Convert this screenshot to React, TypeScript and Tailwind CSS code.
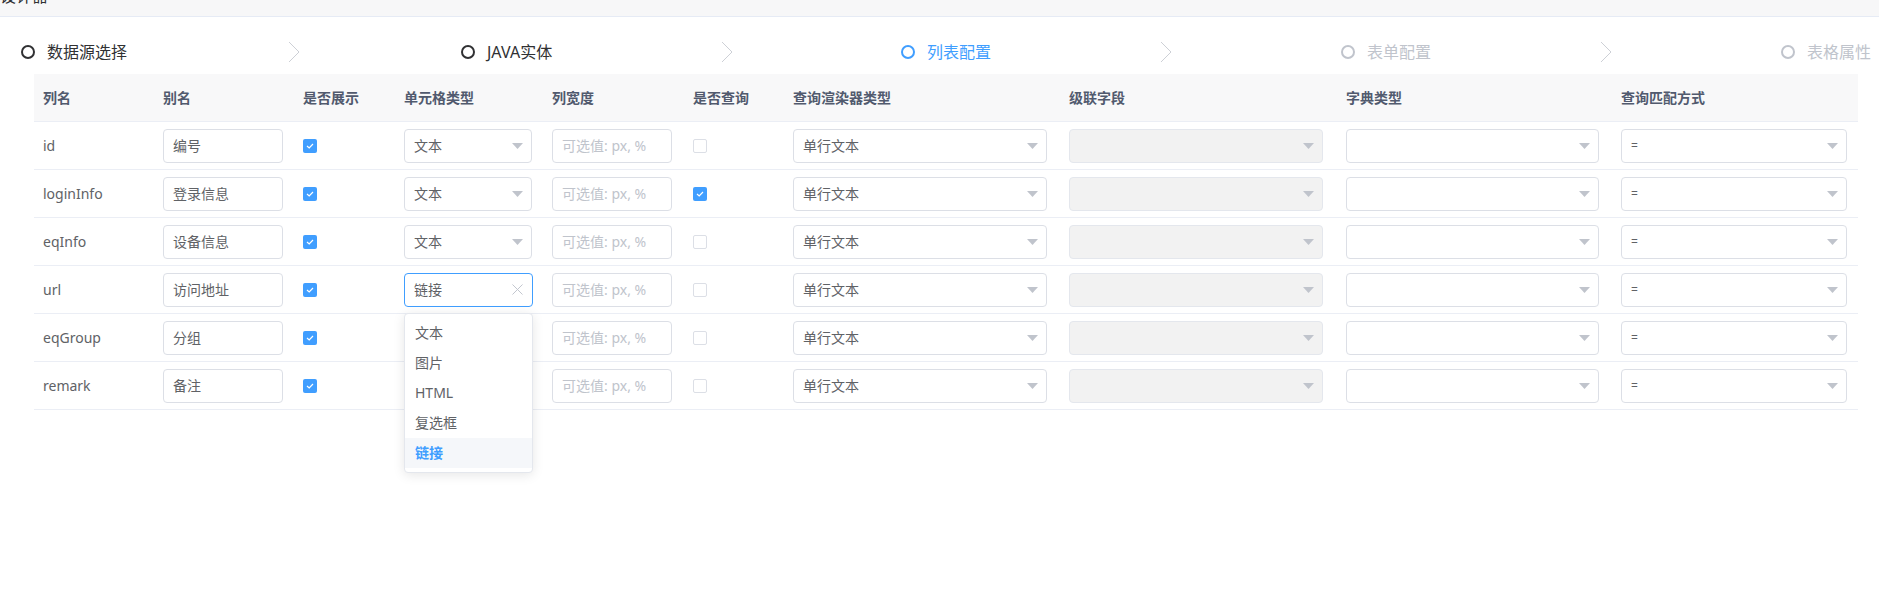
import { X } from "lucide-react";

const font = { fontFamily: '"Noto Sans", "Noto Sans CJK SC", sans-serif' };

type Row = {
  name: string;
  alias: string;
  show: boolean;
  cellType: string;
  query: boolean;
  open?: boolean;
  covered?: boolean;
};

const rows: Row[] = [
  { name: "id", alias: "编号", show: true, cellType: "文本", query: false },
  { name: "loginInfo", alias: "登录信息", show: true, cellType: "文本", query: true },
  { name: "eqInfo", alias: "设备信息", show: true, cellType: "文本", query: false },
  { name: "url", alias: "访问地址", show: true, cellType: "链接", query: false, open: true },
  // the next two selects sit under the open dropdown
  { name: "eqGroup", alias: "分组", show: true, cellType: "文本", query: false, covered: true },
  { name: "remark", alias: "备注", show: true, cellType: "文本", query: false, covered: true },
];

const headers = ["列名", "别名", "是否展示", "单元格类型", "列宽度", "是否查询", "查询渲染器类型", "级联字段", "字典类型", "查询匹配方式"];

const steps = [
  { title: "数据源选择", status: "done" },
  { title: "JAVA实体", status: "done" },
  { title: "列表配置", status: "active" },
  { title: "表单配置", status: "wait" },
  { title: "表格属性", status: "wait" },
];

const Caret = () => (
  <svg width="11" height="6" viewBox="0 0 11 6" className="shrink-0">
    <path d="M0 0 L11 0 L5.5 6 Z" fill="#c0c4cc" />
  </svg>
);

const Chevron = () => (
  <svg width="12" height="22" viewBox="0 0 12 22">
    <path d="M1 1 L11 11 L1 21" fill="none" stroke="#cdd0d6" strokeWidth="1" />
  </svg>
);

const Checkbox = ({ checked }: { checked: boolean }) =>
  checked ? (
    <span className="flex h-[14px] w-[14px] items-center justify-center rounded-[2px] bg-[#409eff]">
      <svg width="8" height="6" viewBox="0 0 8 6">
        <path d="M1 3 L3.2 5 L7 1" fill="none" stroke="#fff" strokeWidth="1.2" />
      </svg>
    </span>
  ) : (
    <span className="block h-[14px] w-[14px] rounded-[2px] border border-[#dcdfe6] bg-white" />
  );

const Input = ({ value, placeholder, width }: { value?: string; placeholder?: string; width: string }) => (
  <div className={`flex h-[34px] ${width} items-center rounded-[4px] border border-[#dcdfe6] bg-white px-[9px] text-[14px]`}>
    {value ? <span className="text-[#606266]">{value}</span> : <span className="text-[#c0c4cc]">{placeholder}</span>}
  </div>
);

const Select = ({
  value,
  width,
  disabled,
  small,
}: {
  value?: string;
  width: string;
  disabled?: boolean;
  small?: boolean;
}) => (
  <div
    className={`flex h-[34px] ${width} items-center justify-between rounded-[4px] border pl-[9px] pr-[8px] ${
      disabled ? "border-[#e4e7ed] bg-[#f2f2f2]" : "border-[#dcdfe6] bg-white"
    }`}
  >
    <span className={`text-[#606266] ${small ? "text-[12px]" : "text-[14px]"}`}>{value}</span>
    <Caret />
  </div>
);

const CellTypeSelect = ({ row }: { row: Row }) => {
  if (row.covered) return <Select width="w-[128px]" />;
  if (!row.open) return <Select value={row.cellType} width="w-[128px]" />;
  const options = ["文本", "图片", "HTML", "复选框", "链接"];
  return (
    <div className="relative">
      <div className="flex h-[34px] w-[129px] items-center justify-between rounded-[4px] border border-[#409eff] bg-white pl-[9px] pr-[5px] text-[14px]">
        <span className="text-[#606266]">{row.cellType}</span>
        <X size={19} strokeWidth={1.2} color="#c0c4cc" />
      </div>
      <div className="absolute left-0 top-[40px] z-10 w-[129px] rounded-[4px] border border-[#e4e7ed] bg-white py-[4px] shadow-[0_2px_12px_0_rgba(0,0,0,0.1)]">
        {options.map((o) => (
          <div
            key={o}
            className={`flex h-[30px] items-center px-[10px] text-[14px] ${
              o === row.cellType ? "bg-[#f5f7fa] font-bold text-[#409eff]" : "text-[#606266]"
            }`}
          >
            {o}
          </div>
        ))}
      </div>
    </div>
  );
};

const gridCols = "grid grid-cols-[120px_140px_101px_148px_141px_100px_276px_277px_275px_246px]";

export default function App() {
  return (
    <div className="min-h-[607px] bg-white" style={font}>
      <div className="relative h-[17px] overflow-hidden border-b border-[#e6ebf5] bg-[#f7f7f8]">
        <span className="absolute left-0 top-[-14px] text-[16px] leading-[20px] text-[#303133]">设计器</span>
      </div>

      <div className="mb-[11px] mt-[24px] flex h-[22px] overflow-hidden pl-[21px]">
        {steps.map((s, i) => {
          const textCls =
            s.status === "active" ? "text-[#409eff]" : s.status === "done" ? "text-[#303133]" : "text-[#c0c4cc]";
          const borderCls =
            s.status === "active" ? "border-[#409eff]" : s.status === "done" ? "border-[#303133]" : "border-[#c0c4cc]";
          return (
            <div key={s.title} className="flex w-[440px] shrink-0 items-center">
              <span className={`h-[14px] w-[14px] shrink-0 rounded-full border-2 ${borderCls}`} />
              <span className={`ml-[12px] whitespace-nowrap text-[16px] leading-[22px] ${textCls}`}>{s.title}</span>
              {i < steps.length - 1 && (
                <div className="flex flex-1 justify-center">
                  <Chevron />
                </div>
              )}
            </div>
          );
        })}
      </div>

      <div className="ml-[34px] w-[1824px]">
        <div className={`${gridCols} h-[48px] items-center border-b border-[#ebeef5] bg-[#f8f8f9]`}>
          {headers.map((h) => (
            <div key={h} className="pl-[9px] text-[14px] font-bold text-[#515a6e]">
              {h}
            </div>
          ))}
        </div>
        {rows.map((r) => (
          <div key={r.name} className={`${gridCols} h-[48px] items-center border-b border-[#ebeef5]`}>
            <div className="pl-[9px] text-[14px] text-[#606266]">{r.name}</div>
            <div className="pl-[9px]">
              <Input value={r.alias} width="w-[120px]" />
            </div>
            <div className="pl-[9px]">
              <Checkbox checked={r.show} />
            </div>
            <div className="pl-[9px]">
              <CellTypeSelect row={r} />
            </div>
            <div className="pl-[9px]">
              <Input placeholder="可选值: px, %" width="w-[120px]" />
            </div>
            <div className="pl-[9px]">
              <Checkbox checked={r.query} />
            </div>
            <div className="pl-[9px]">
              <Select value="单行文本" width="w-[254px]" />
            </div>
            <div className="pl-[9px]">
              <Select width="w-[254px]" disabled />
            </div>
            <div className="pl-[9px]">
              <Select width="w-[253px]" />
            </div>
            <div className="pl-[9px]">
              <Select value="=" width="w-[226px]" small />
            </div>
          </div>
        ))}
      </div>
    </div>
  );
}
